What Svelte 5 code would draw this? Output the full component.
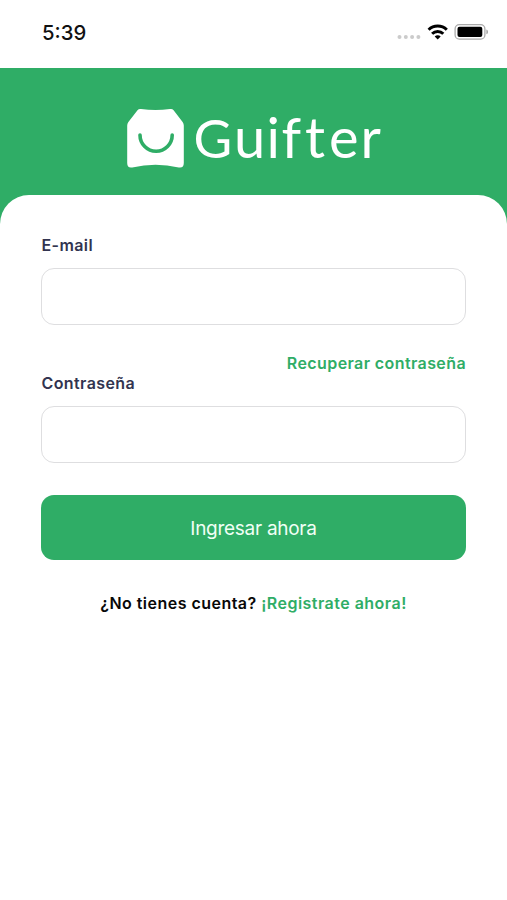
<script lang="ts">
	let email = '';
	let password = '';

	const letters = [
		{ char: 'u', x: 234 },
		{ char: 'i', x: 266.5 },
		{ char: 'f', x: 281.5 },
		{ char: 't', x: 305 },
		{ char: 'e', x: 329 },
		{ char: 'r', x: 360.5 }
	];
</script>

<div class="screen">
	<div class="status-bar">
		<span class="time">5:39</span>
		<svg class="status-icons" width="92" height="20" viewBox="396 22 92 20" aria-hidden="true">
			<g fill="#cbcbcb">
				<circle cx="399.5" cy="37" r="2" />
				<circle cx="405.8" cy="37" r="2" />
				<circle cx="412.1" cy="37" r="2" />
				<circle cx="418.4" cy="37" r="2" />
			</g>
			<g fill="none" stroke="#000" stroke-width="3">
				<path d="M428.6 29.8a13 13 0 0 1 18.2 0" />
				<path d="M432.1 33.8a8 8 0 0 1 11.2 0" />
			</g>
			<path d="M437.7 39.5l-3-3.1a4.2 4.2 0 0 1 6 0z" />
			<rect x="455.1" y="24.7" width="29.8" height="14.4" rx="4.2" fill="#fff" stroke="#aaa" stroke-width="1.3" />
			<rect x="457.5" y="26.8" width="24.8" height="10.2" rx="2" />
			<path d="M486.3 29.5q2 .8 2 2.4t-2 2.4z" fill="#aaa" />
		</svg>
	</div>

	<header class="header">
		<svg class="logo" width="262" height="84" viewBox="125 96 262 84" role="img" aria-label="Guifter">
			<path
				d="M137.5 110.2q1.4-1.6 3.5-1.1q14.5 1.8 29 0q2.2-.5 3.6 1.1l9 11.8q1.2 1.6 1.2 3.6V163q0 5.2-5 4.4q-23.3-5.5-46.6 0q-5 .8-5-4.4V125.6q0-2 1.2-3.6z"
				fill="#fff"
			/>
			<path d="M140 135a16 16.2 0 0 0 32.2 0" fill="none" stroke="#2fad66" stroke-width="3.6" stroke-linecap="round" />
			<text class="wordmark" y="157.5">
				<tspan class="initial" x="193.5">G</tspan>{#each letters as letter}<tspan x={letter.x}>{letter.char}</tspan>{/each}
			</text>
		</svg>
	</header>

	<main class="card">
		<form on:submit|preventDefault>
			<label for="email">E-mail</label>
			<input id="email" type="email" bind:value={email} />

			<a class="recover" href="#recuperar">Recuperar contraseña</a>
			<label for="password">Contraseña</label>
			<input id="password" type="password" bind:value={password} />

			<button type="submit">Ingresar ahora</button>
		</form>

		<p class="register">
			¿No tienes cuenta? <a href="#registro">¡Registrate ahora!</a>
		</p>
	</main>
</div>

<style>
	:global(body) {
		background: #fff;
	}

	.screen {
		min-height: 900px;
		display: flex;
		flex-direction: column;
		background: #2fad66;
		font-family: Inter, 'Liberation Sans', sans-serif;
	}

	.status-bar {
		height: 68px;
		box-sizing: border-box;
		padding: 22px 19px 0 42px;
		display: flex;
		justify-content: space-between;
		align-items: flex-start;
		background: #fff;
	}

	.time {
		font-size: 20.3px;
		line-height: 21px;
		font-weight: 500;
		color: #111;
	}

	.header {
		height: 127px;
		box-sizing: border-box;
		padding: 28px 0 0 125px;
	}

	.logo {
		display: block;
		overflow: visible;
	}

	.wordmark {
		font-family: Lato, sans-serif;
		font-size: 56px;
		fill: #fff;
	}

	.initial {
		font-size: 53px;
	}

	.card {
		flex: 1;
		padding: 40px 41px 0;
		background: #fff;
		border-radius: 29px 29px 0 0;
	}

	form {
		display: flex;
		flex-direction: column;
	}

	label,
	.recover,
	.register {
		font-size: 16px;
		line-height: 20px;
		font-weight: 600;
		letter-spacing: 0.4px;
	}

	label {
		padding-left: 0.5px;
		color: #323450;
	}

	input {
		height: 57px;
		box-sizing: border-box;
		margin: 13px 0 0;
		padding: 0 16px;
		border: 1.5px solid #dedee0;
		border-radius: 13px;
		background: #fff;
		font: inherit;
		outline: none;
	}

	.recover {
		align-self: flex-end;
		margin-top: 28px;
	}

	a {
		color: #2fad66;
		text-decoration: none;
	}

	button {
		height: 65px;
		margin: 32px 0 0;
		padding: 2px 0 0;
		border: none;
		border-radius: 13px;
		background: #2fad66;
		color: #f0fff5;
		font-family: inherit;
		font-size: 19px;
		line-height: 24px;
		letter-spacing: -0.28px;
		cursor: pointer;
	}

	.register {
		margin: 33px 0 0;
		text-align: center;
		letter-spacing: 0.47px;
		color: #080808;
	}
</style>
